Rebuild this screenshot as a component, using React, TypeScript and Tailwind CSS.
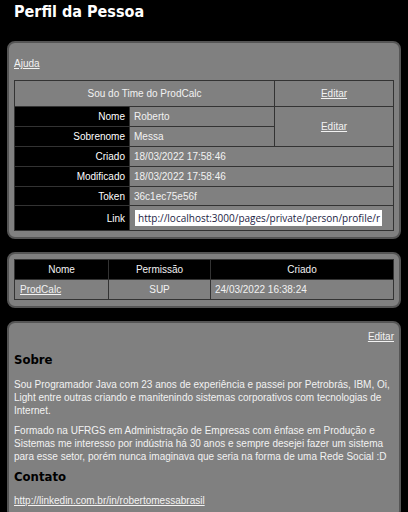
import React from 'react';

const Panel: React.FC<{ children: React.ReactNode; className?: string }> = ({ children, className }) => (
  <div className={`mx-[7px] rounded-[8px] border-2 border-[#555555] bg-[#808080] px-[5px] ${className ?? ''}`}>
    {children}
  </div>
);

const cell = 'border border-[#333333] px-[4px] text-[10px] leading-[13px] text-[#f2f2f2]';
const label = `${cell} bg-black text-right text-white`;
const heading = "font-['DejaVu_Sans_Condensed','DejaVu_Sans',sans-serif] text-[13px] font-bold leading-[20px] text-black";

export default function App() {
  return (
    <div className="min-h-screen w-[408px] bg-black font-['Liberation_Sans',Arial,sans-serif]">
      <h1 className="h-[41px] px-[14px] font-['DejaVu_Sans_Condensed','DejaVu_Sans',sans-serif] text-[16px] font-bold leading-[24px] text-white">
        Perfil da Pessoa
      </h1>

      {/* dados pessoais */}
      <Panel className="pt-[14px] pb-[6px]">
        <div className="text-[10px] leading-[13px]">
          <a href="#" className="text-[#f2f2f2] underline">Ajuda</a>
        </div>
        <table className="mt-[10px] w-full table-fixed border-collapse">
          <colgroup>
            <col className="w-[115px]" />
            <col />
            <col className="w-[119px]" />
          </colgroup>
          <tbody>
            <tr className="h-[26px]">
              <td colSpan={2} className={`${cell} text-center`}>Sou do Time do ProdCalc</td>
              <td className={`${cell} text-center`}>
                <a href="#" className="underline">Editar</a>
              </td>
            </tr>
            <tr className="h-[20px]">
              <td className={label}>Nome</td>
              <td className={cell}>Roberto</td>
              <td rowSpan={2} className={`${cell} text-center`}>
                <a href="#" className="underline">Editar</a>
              </td>
            </tr>
            <tr className="h-[20px]">
              <td className={label}>Sobrenome</td>
              <td className={cell}>Messa</td>
            </tr>
            <tr className="h-[20px]">
              <td className={label}>Criado</td>
              <td colSpan={2} className={cell}>18/03/2022 17:58:46</td>
            </tr>
            <tr className="h-[20px]">
              <td className={label}>Modificado</td>
              <td colSpan={2} className={cell}>18/03/2022 17:58:46</td>
            </tr>
            <tr className="h-[19px]">
              <td className={label}>Token</td>
              <td colSpan={2} className={cell}>36c1ec75e56f</td>
            </tr>
            <tr className="h-[25px]">
              <td className={label}>Link</td>
              <td colSpan={2} className={cell}>
                <div className="ml-[1px] h-[16px] w-[247px] overflow-hidden whitespace-nowrap bg-white px-[3px] font-['Open_Sans',sans-serif] text-[10px] leading-[16px] text-[#1c1c44]">
                  http://localhost:3000/pages/private/person/profile/r
                </div>
              </td>
            </tr>
          </tbody>
        </table>
      </Panel>

      {/* times */}
      <Panel className="mt-[13px] pt-[5px] pb-[6px]">
        <table className="w-full table-fixed border-collapse">
          <colgroup>
            <col className="w-[94px]" />
            <col className="w-[102px]" />
            <col />
          </colgroup>
          <thead>
            <tr className="h-[20px] bg-black">
              <th className={`${cell} font-normal text-[#dddddd]`}>Nome</th>
              <th className={`${cell} font-normal text-[#dddddd]`}>Permissão</th>
              <th className={`${cell} font-normal text-[#dddddd]`}>Criado</th>
            </tr>
          </thead>
          <tbody>
            <tr className="h-[20px]">
              <td className={`${cell} px-[5px]`}>
                <a href="#" className="underline">ProdCalc</a>
              </td>
              <td className={`${cell} text-center`}>SUP</td>
              <td className={cell}>24/03/2022 16:38:24</td>
            </tr>
          </tbody>
        </table>
      </Panel>

      {/* sobre */}
      <Panel className="mt-[13px] pt-[7px] pb-[10px] text-[10px] leading-[13px] text-[#f2f2f2]">
        <div className="flex justify-end">
          <a href="#" className="underline">Editar</a>
        </div>
        <h2 className={`mt-[7px] ${heading}`}>Sobre</h2>
        <p className="mt-[8px]">
          Sou Programador Java com 23 anos de experiência e passei por Petrobrás, IBM, Oi, Light entre outras criando e manitenindo sistemas corporativos com tecnologias de Internet.
        </p>
        <p className="mt-[7px]">
          Formado na UFRGS em Administração de Empresas com ênfase em Produção e Sistemas me interesso por indústria há 30 anos e sempre desejei fazer um sistema para esse setor, porém nunca imaginava que seria na forma de uma Rede Social :D
        </p>
        <h2 className={`mt-[4px] ${heading}`}>Contato</h2>
        <p className="mt-[7px]">
          <a href="#" className="underline">http://linkedin.com.br/in/robertomessabrasil</a>
        </p>
      </Panel>
    </div>
  );
}
